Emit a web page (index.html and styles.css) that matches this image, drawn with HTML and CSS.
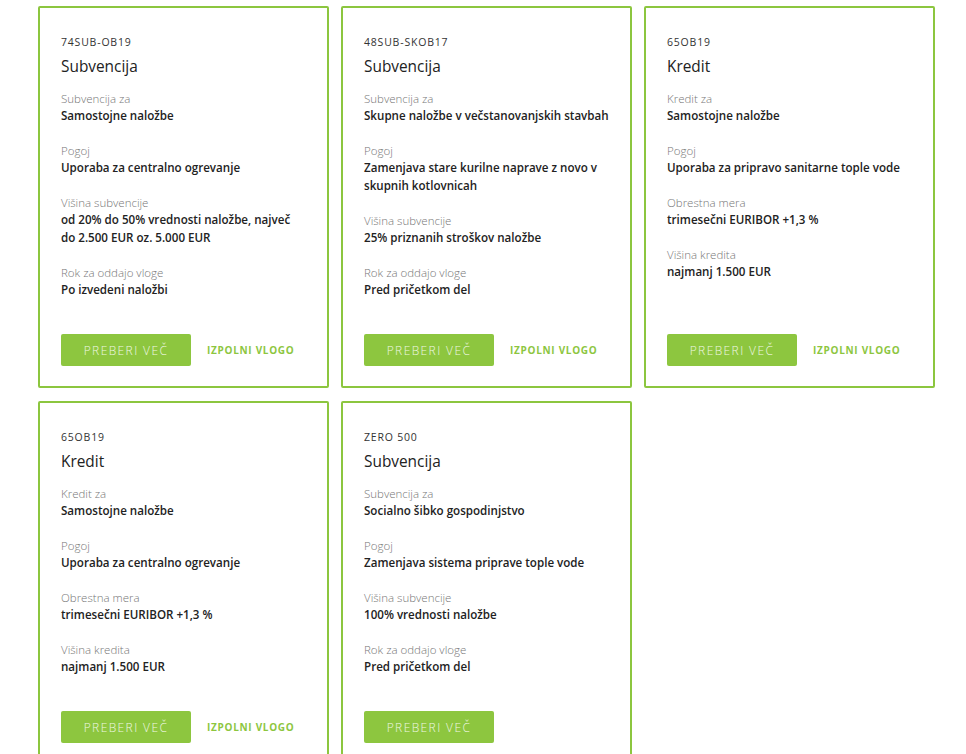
FILE: index.html
```html
<!DOCTYPE html>
<html lang="sl">
<head>
<meta charset="utf-8">
<title>Subvencije in krediti</title>
<link rel="stylesheet" href="styles.css">
</head>
<body>
<div class="grid">
  <div class="card">
    <div class="code">74SUB-OB19</div>
    <div class="title">Subvencija</div>
    <div class="field"><div class="label">Subvencija za</div><div class="value">Samostojne naložbe</div></div>
    <div class="field"><div class="label">Pogoj</div><div class="value">Uporaba za centralno ogrevanje</div></div>
    <div class="field"><div class="label">Višina subvencije</div><div class="value">od 20% do 50% vrednosti naložbe, največ do 2.500 EUR oz. 5.000 EUR</div></div>
    <div class="field"><div class="label">Rok za oddajo vloge</div><div class="value">Po izvedeni naložbi</div></div>
    <div class="actions"><a class="btn">PREBERI VEČ</a><a class="link">IZPOLNI VLOGO</a></div>
  </div>
  <div class="card">
    <div class="code">48SUB-SKOB17</div>
    <div class="title">Subvencija</div>
    <div class="field"><div class="label">Subvencija za</div><div class="value">Skupne naložbe v večstanovanjskih stavbah</div></div>
    <div class="field"><div class="label">Pogoj</div><div class="value">Zamenjava stare kurilne naprave z novo v skupnih kotlovnicah</div></div>
    <div class="field"><div class="label">Višina subvencije</div><div class="value">25% priznanih stroškov naložbe</div></div>
    <div class="field"><div class="label">Rok za oddajo vloge</div><div class="value">Pred pričetkom del</div></div>
    <div class="actions"><a class="btn">PREBERI VEČ</a><a class="link">IZPOLNI VLOGO</a></div>
  </div>
  <div class="card">
    <div class="code">65OB19</div>
    <div class="title">Kredit</div>
    <div class="field"><div class="label">Kredit za</div><div class="value">Samostojne naložbe</div></div>
    <div class="field"><div class="label">Pogoj</div><div class="value">Uporaba za pripravo sanitarne tople vode</div></div>
    <div class="field"><div class="label">Obrestna mera</div><div class="value">trimesečni EURIBOR +1,3 %</div></div>
    <div class="field"><div class="label">Višina kredita</div><div class="value">najmanj 1.500 EUR</div></div>
    <div class="actions"><a class="btn">PREBERI VEČ</a><a class="link">IZPOLNI VLOGO</a></div>
  </div>
  <div class="card">
    <div class="code">65OB19</div>
    <div class="title">Kredit</div>
    <div class="field"><div class="label">Kredit za</div><div class="value">Samostojne naložbe</div></div>
    <div class="field"><div class="label">Pogoj</div><div class="value">Uporaba za centralno ogrevanje</div></div>
    <div class="field"><div class="label">Obrestna mera</div><div class="value">trimesečni EURIBOR +1,3 %</div></div>
    <div class="field"><div class="label">Višina kredita</div><div class="value">najmanj 1.500 EUR</div></div>
    <div class="actions"><a class="btn">PREBERI VEČ</a><a class="link">IZPOLNI VLOGO</a></div>
  </div>
  <div class="card">
    <div class="code">ZERO 500</div>
    <div class="title">Subvencija</div>
    <div class="field"><div class="label">Subvencija za</div><div class="value">Socialno šibko gospodinjstvo</div></div>
    <div class="field"><div class="label">Pogoj</div><div class="value">Zamenjava sistema priprave tople vode</div></div>
    <div class="field"><div class="label">Višina subvencije</div><div class="value">100% vrednosti naložbe</div></div>
    <div class="field"><div class="label">Rok za oddajo vloge</div><div class="value">Pred pričetkom del</div></div>
    <div class="actions"><a class="btn">PREBERI VEČ</a></div>
  </div>
</div>
</body>
</html>
```
FILE: styles.css
```css
html, body {
  margin: 0;
  padding: 0;
  background: #fff;
}
body {
  font-family: "Open Sans", "Liberation Sans", sans-serif;
  color: #333;
}
.grid {
  display: grid;
  grid-template-columns: repeat(3, 291px);
  column-gap: 12px;
  row-gap: 13px;
  padding: 6px 0 0 38px;
}
.card {
  border: 2px solid #8cc63f;
  border-radius: 2px;
  padding: 26px 20px 20px 21px;
  display: flex;
  flex-direction: column;
  box-sizing: border-box;
}
.code {
  font-size: 10.5px;
  line-height: 16px;
  letter-spacing: 0.8px;
  color: #333;
}
.title {
  font-size: 15.4px;
  line-height: 22px;
  margin-top: 6px;
  color: #222;
}
.field {
  margin-top: 12px;
}
.field + .field {
  margin-top: 17px;
}
.label {
  font-size: 11.5px;
  line-height: 17px;
  font-weight: 300;
  color: #777;
}
.value {
  font-size: 11.6px;
  line-height: 18px;
  font-weight: 600;
  color: #222;
}
.actions {
  margin-top: auto;
  padding-top: 35px;
  display: flex;
  align-items: center;
}
.btn {
  display: flex;
  align-items: center;
  justify-content: center;
  flex: none;
  width: 130px;
  height: 32px;
  background: #8dc63f;
  border-radius: 2px;
  color: #eef7e2;
  font-size: 12px;
  font-weight: 300;
  letter-spacing: 1.4px;
}
.link {
  margin-left: 16px;
  white-space: nowrap;
  color: #8dc63f;
  font-size: 10px;
  font-weight: 700;
  letter-spacing: 0.7px;
}
```
